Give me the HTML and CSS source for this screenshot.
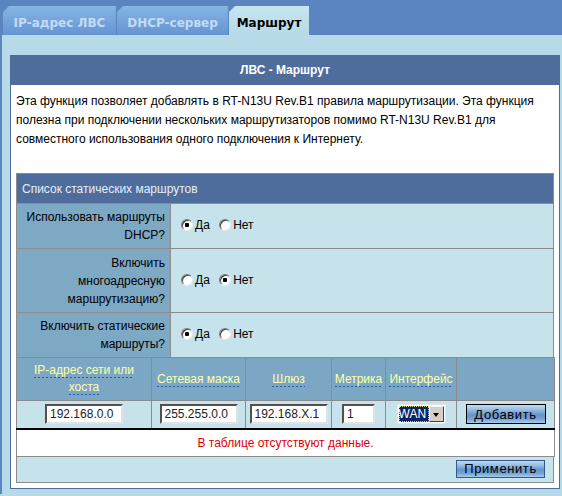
FILE: index.html
```html
<!DOCTYPE html>
<html lang="ru">
<head>
<meta charset="utf-8">
<title>ЛВС - Маршрут</title>
<link rel="stylesheet" href="styles.css">
</head>
<body>
<div class="tabs">
  <div class="tab tab1">IP-адрес ЛВС</div>
  <div class="tab tab2">DHCP-сервер</div>
  <div class="tab tab3 active">Маршрут</div>
</div>
<div class="content">
  <div class="box">
    <div class="title">ЛВС - Маршрут</div>
    <div class="inner">
      <p class="desc">Эта функция позволяет добавлять в RT-N13U Rev.B1 правила маршрутизации. Эта функция<br>полезна при подключении нескольких маршрутизаторов помимо RT-N13U Rev.B1 для<br>совместного использования одного подключения к Интернету.</p>
      <table class="form">
        <colgroup><col class="cl"><col></colgroup>
        <tr class="rcap"><th colspan="2" class="cap">Список статических маршрутов</th></tr>
        <tr class="r2l">
          <th class="lbl">Использовать маршруты<br>DHCP?</th>
          <td class="val">
            <label class="opt"><input type="radio" name="dhcp" checked><span>Да</span></label>
            <label class="opt"><input type="radio" name="dhcp"><span>Нет</span></label>
          </td>
        </tr>
        <tr class="r3l">
          <th class="lbl">Включить<br>многоадресную<br>маршрутизацию?</th>
          <td class="val">
            <label class="opt"><input type="radio" name="mc"><span>Да</span></label>
            <label class="opt"><input type="radio" name="mc" checked><span>Нет</span></label>
          </td>
        </tr>
        <tr class="r2l">
          <th class="lbl">Включить статические<br>маршруты?</th>
          <td class="val">
            <label class="opt"><input type="radio" name="st" checked><span>Да</span></label>
            <label class="opt"><input type="radio" name="st"><span>Нет</span></label>
          </td>
        </tr>
      </table>
      <table class="grid">
        <colgroup>
          <col class="c1"><col class="c2"><col class="c3"><col class="c4"><col class="c5"><col class="c6">
        </colgroup>
        <tr class="ghead">
          <th><span class="u">IP-адрес сети или</span><br><span class="u">хоста</span></th>
          <th><span class="u">Сетевая маска</span></th>
          <th><span class="u">Шлюз</span></th>
          <th><span class="u">Метрика</span></th>
          <th><span class="u">Интерфейс</span></th>
          <th></th>
        </tr>
        <tr class="ginput">
          <td><input class="txt w78" type="text" value="192.168.0.0"></td>
          <td><input class="txt w78" type="text" value="255.255.0.0"></td>
          <td><input class="txt w78" type="text" value="192.168.X.1"></td>
          <td><input class="txt w33" type="text" value="1"></td>
          <td><span class="select"><span class="sv">WAN</span><span class="sa"></span></span></td>
          <td><button class="btn add" type="button">Добавить</button></td>
        </tr>
        <tr class="empty">
          <td colspan="6">В таблице отсутствуют данные.</td>
        </tr>
      </table>
      <div class="apply"><button class="btn ap" type="button">Применить</button></div>
    </div>
  </div>
</div>
</body>
</html>
```
FILE: styles.css
```css
body {
  margin: 0;
  background: #b6dae7;
  font-family: "Liberation Sans", Arial, sans-serif;
  font-size: 12px;
  color: #000;
}

.tabs {
  display: flex;
  gap: 1px;
  height: 29px;
  padding: 6px 0 0 3px;
  background: #5b85c1;
}

.tab {
  box-sizing: border-box;
  height: 29px;
  padding-top: 4px;
  display: flex;
  align-items: center;
  justify-content: center;
  font-family: "DejaVu Sans", Verdana, sans-serif;
  font-weight: bold;
  font-size: 12px;
  color: #c2dcf4;
  background: linear-gradient(#86b4e4, #6595d1);
  clip-path: polygon(0 6px, 6px 0, 100% 0, 100% 100%, 0 100%);
}

.tab1 { width: 113px; }
.tab2 { width: 111px; }
.tab3 { width: 80px; }

.tab.active {
  color: #000;
  background: linear-gradient(#c6e6ef, #b6dae7);
}

.content {
  border-left: 2px solid #5b85c1;
  padding: 20px 0 5px 8px;
}

.box {
  width: 548px;
  border: 1px solid #4e6d9d;
  border-top: none;
  background: #fff;
}

.title {
  height: 30px;
  line-height: 30px;
  background: #4e6d9d;
  color: #fff;
  font-weight: bold;
  text-align: center;
}

.inner {
  padding: 0 5px 5px;
}

.desc {
  margin: 0 0 24px;
  padding-top: 7px;
  line-height: 19px;
  white-space: nowrap;
}

table {
  width: 538px;
  border-collapse: collapse;
  table-layout: fixed;
}

th, td {
  border: 1px solid #8c8c8c;
  padding: 0;
}

.cl { width: 154px; }

.cap {
  height: 29px;
  padding: 0 5px;
  background: #4e6d9d;
  color: #e6eef8;
  font-weight: normal;
  text-align: left;
}

.lbl {
  padding: 0 5px;
  background: #7ea9c5;
  font-weight: normal;
  text-align: right;
  line-height: 18px;
}

.val {
  background: #c6e3ec;
  padding-left: 10px;
}

.r2l { height: 45px; }
.r3l { height: 64px; }

.opt {
  display: inline-flex;
  align-items: center;
  margin-right: 6px;
}

.opt span { margin-left: 2px; }

.opt input {
  appearance: none;
  -webkit-appearance: none;
  box-sizing: border-box;
  width: 12px;
  height: 12px;
  margin: 0;
  border-radius: 50%;
  border: 1px solid;
  border-color: #7a7a7a #e8e8e8 #e8e8e8 #7a7a7a;
  box-shadow: inset 1px 1px 0 #404040;
  background: #fff;
}

.opt input:checked {
  background: radial-gradient(circle at 50% 50%, #000 0 2px, #fff 2.5px);
}

.grid {
  margin-top: -1px;
}

.c1 { width: 135px; }
.c2 { width: 94px; }
.c3 { width: 86px; }
.c4 { width: 54px; }
.c5 { width: 71px; }
.c6 { width: 98px; }

.ghead { height: 43px; }

.ghead th {
  background: #7ba7c4;
  color: #ffffa6;
  font-weight: normal;
  line-height: 17px;
  white-space: nowrap;
}

.u {
  padding-bottom: 1px;
  background: linear-gradient(to right, #1c62b4 50%, transparent 50%) repeat-x left bottom / 4px 1px;
}

.ginput { height: 28px; }

.ginput td {
  background: #c6e3ec;
  text-align: center;
  vertical-align: middle;
}

.txt {
  box-sizing: border-box;
  height: 20px;
  margin: 0;
  padding: 0 3px;
  border: 2px solid;
  border-color: #505050 #e2e2e2 #e2e2e2 #505050;
  background: #fff;
  color: #222;
  font-family: "Liberation Sans", Arial, sans-serif;
  font-size: 12px;
  vertical-align: middle;
}

.w78 { width: 78px; }
.w33 { width: 33px; }

.select {
  box-sizing: border-box;
  display: inline-flex;
  width: 49px;
  height: 20px;
  padding: 1px;
  border: 1px solid #e6e6e6;
  background: #fff;
  vertical-align: middle;
}

.sv {
  flex: 1;
  background: #0a246a;
  color: #fff;
  line-height: 16px;
  text-align: left;
  outline: 1px dotted #d8d890;
  outline-offset: -1px;
}

.sa {
  position: relative;
  box-sizing: border-box;
  width: 15px;
  border: 1px solid;
  border-color: #f4f4f4 #404040 #404040 #f4f4f4;
  background: #d4d0c8;
}

.sa::after {
  content: "";
  position: absolute;
  left: 3px;
  top: 6px;
  border-left: 3.5px solid transparent;
  border-right: 3.5px solid transparent;
  border-top: 4px solid #000;
}

.btn {
  box-sizing: border-box;
  margin: 0;
  padding: 0;
  font-family: "Liberation Sans", Arial, sans-serif;
  font-size: 13px;
  letter-spacing: 0.6px;
  color: #000;
  background: linear-gradient(#c2dcf1 0%, #94bbe2 28%, #6594cc 55%, #7aa6d7 80%, #a8cbea 100%);
  vertical-align: middle;
}

.add {
  width: 80px;
  height: 20px;
  border: 1px solid #000;
}

.empty td {
  height: 26px;
  border-top: 2px solid #000;
  background: #fff;
  color: #e00000;
  text-align: center;
}

.apply {
  box-sizing: border-box;
  margin-top: -1px;
  height: 27px;
  padding: 3px 8px 0 0;
  border: 1px solid #8c8c8c;
  background: #c6e3ec;
  text-align: right;
}

.ap {
  width: 89px;
  height: 18px;
  border: 1px solid #35588f;
  vertical-align: top;
}
```
